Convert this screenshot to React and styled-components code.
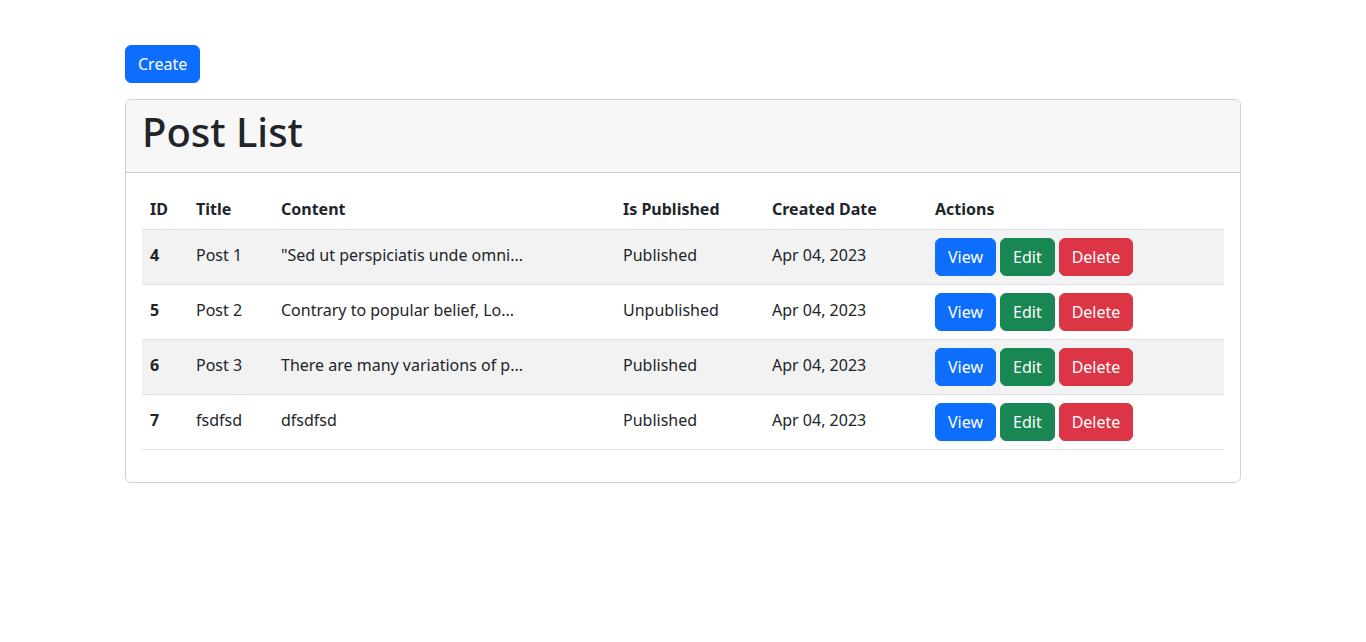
import styled, { createGlobalStyle } from "styled-components";

const GlobalStyle = createGlobalStyle`
  * { box-sizing: border-box; }
  body {
    margin: 0;
    font-family: "Noto Sans", "Open Sans", sans-serif;
    font-size: 16px;
    line-height: 1.5;
    color: #212529;
    background: #fff;
  }
`;

const Page = styled.div`
  width: 1140px;
  margin: 0 auto;
  padding: 45px 12px 0;
`;

const Button = styled.button`
  display: inline-block;
  font-family: inherit;
  font-size: 16px;
  line-height: 24px;
  padding: 6px 12px;
  border: 1px solid ${(p) => p.bg};
  border-radius: 6px;
  background: ${(p) => p.bg};
  color: #fff;
  cursor: pointer;
`;

const Toolbar = styled.div`
  margin-bottom: 16px;
`;

const Card = styled.div`
  border: 1px solid rgba(0, 0, 0, 0.175);
  border-radius: 6px;
  overflow: hidden;
`;

const CardHeader = styled.div`
  background: #f7f7f7;
  padding: 8px 16px;
  border-bottom: 1px solid rgba(0, 0, 0, 0.175);
`;

const Heading = styled.h1`
  margin: 0 0 8px;
  font-size: 40px;
  line-height: 48px;
  font-weight: 500;
`;

const CardBody = styled.div`
  padding: 16px;
`;

const Table = styled.table`
  width: 100%;
  border-collapse: collapse;
  table-layout: fixed;
  margin-bottom: 16px;
`;

const Th = styled.th`
  text-align: left;
  font-weight: 700;
  padding: 8px;
  line-height: 24px;
  border-bottom: 1px solid #dee2e6;
  width: ${(p) => p.w}px;
`;

const Row = styled.tr`
  background: ${(p) => (p.striped ? "#f2f2f2" : "#fff")};
`;

const Td = styled.td`
  padding: 6px 8px 10px;
  line-height: 24px;
  vertical-align: middle;
  border-bottom: 1px solid #dee2e6;
  font-weight: ${(p) => (p.bold ? 700 : 400)};
  white-space: nowrap;
`;

const ActionCell = styled.td`
  padding: 8px;
  vertical-align: middle;
  border-bottom: 1px solid #dee2e6;
`;

const Actions = styled.div`
  display: flex;
  gap: 4px;
`;

const posts = [
  { id: 4, title: "Post 1", content: "\"Sed ut perspiciatis unde omni...", published: true },
  { id: 5, title: "Post 2", content: "Contrary to popular belief, Lo...", published: false },
  { id: 6, title: "Post 3", content: "There are many variations of p...", published: true },
  { id: 7, title: "fsdfsd", content: "dfsdfsd", published: true },
];

const columns = [
  ["ID", 46],
  ["Title", 85],
  ["Content", 342],
  ["Is Published", 149],
  ["Created Date", 163],
  ["Actions", 297],
];

export default function App() {
  return (
    <>
      <GlobalStyle />
      <Page>
        <Toolbar>
          <Button bg="#0d6efd">Create</Button>
        </Toolbar>
        <Card>
          <CardHeader>
            <Heading>Post List</Heading>
          </CardHeader>
          <CardBody>
            <Table>
              <thead>
                <tr>
                  {columns.map(([label, w]) => (
                    <Th key={label} w={w}>{label}</Th>
                  ))}
                </tr>
              </thead>
              <tbody>
                {posts.map((post, i) => (
                  <Row key={post.id} striped={i % 2 === 0}>
                    <Td bold>{post.id}</Td>
                    <Td>{post.title}</Td>
                    <Td>{post.content}</Td>
                    <Td>{post.published ? "Published" : "Unpublished"}</Td>
                    <Td>Apr 04, 2023</Td>
                    <ActionCell>
                      <Actions>
                        <Button bg="#0d6efd">View</Button>
                        <Button bg="#198754">Edit</Button>
                        <Button bg="#dc3545">Delete</Button>
                      </Actions>
                    </ActionCell>
                  </Row>
                ))}
              </tbody>
            </Table>
          </CardBody>
        </Card>
      </Page>
    </>
  );
}
